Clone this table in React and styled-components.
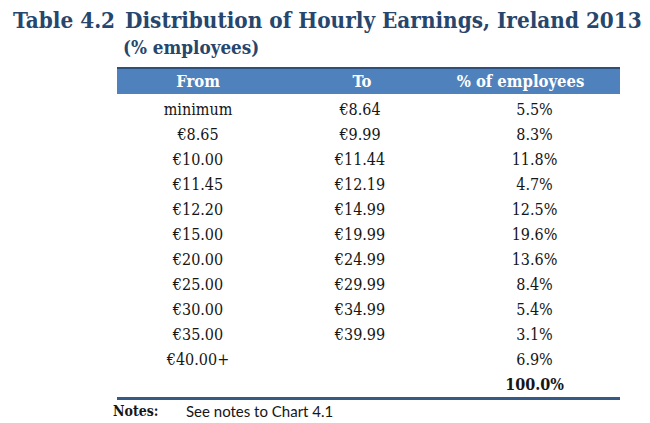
import React from 'react';
import styled, { createGlobalStyle } from 'styled-components';

const GlobalStyle = createGlobalStyle`
  html, body {
    margin: 0;
    padding: 0;
    background: #ffffff;
  }
`;

const rows = [
  ['minimum', '€8.64', '5.5%'],
  ['€8.65', '€9.99', '8.3%'],
  ['€10.00', '€11.44', '11.8%'],
  ['€11.45', '€12.19', '4.7%'],
  ['€12.20', '€14.99', '12.5%'],
  ['€15.00', '€19.99', '19.6%'],
  ['€20.00', '€24.99', '13.6%'],
  ['€25.00', '€29.99', '8.4%'],
  ['€30.00', '€34.99', '5.4%'],
  ['€35.00', '€39.99', '3.1%'],
  ['€40.00+', '', '6.9%'],
];

const Page = styled.div`
  width: 650px;
  height: 423px;
  overflow: hidden;
  font-family: "DejaVu Serif", "Liberation Serif", serif;
  color: #161616;
`;

const Title = styled.h1`
  margin: 0;
  padding: 6px 0 0 13px;
  height: 28px;
  font-size: 22.3px;
  line-height: 28px;
  font-weight: bold;
  font-stretch: condensed;
  color: #26466d;
  white-space: nowrap;
`;

const Sub = styled.span`
  margin-left: 10px;
`;

const Subtitle = styled.div`
  padding-left: 123px;
  height: 26px;
  font-size: 18.7px;
  line-height: 26px;
  font-weight: bold;
  font-stretch: condensed;
  color: #26466d;
`;

const Table = styled.div`
  margin: 7px 0 0 117px;
  width: 503px;
`;

const Grid = styled.div`
  display: grid;
  grid-template-columns: 162px 170px 171px;
  align-items: center;
`;

const HeadRow = styled(Grid)`
  height: 25px;
  border-top: 2px solid #2c4f7c;
  background: #4f81bd;
  color: #ffffff;
  font-weight: bold;
  font-size: 16.5px;
  font-stretch: condensed;
`;

const HeadCell = styled.div`
  text-align: center;
  padding-right: ${p => p.$shift || 0}px;
`;

const Body = styled.div`
  padding-top: 3px;
  border-bottom: 3px solid #355a86;
`;

const Row = styled(Grid)`
  height: 25px;
  font-size: 16px;
  font-stretch: condensed;
  font-weight: ${p => (p.$total ? 'bold' : 'normal')};
`;

const Cell = styled.div`
  text-align: center;
  padding-right: ${p => p.$shift || 0}px;
`;

const Notes = styled.div`
  display: flex;
  align-items: center;
  margin: 1px 0 0 113px;
  height: 20px;
  font-size: 14px;
`;

const NotesLabel = styled.span`
  width: 73px;
  font-weight: bold;
  font-stretch: condensed;
`;

const NotesText = styled.span`
  font-family: "Lato", "Liberation Sans", sans-serif;
  font-size: 15px;
`;

export default function App() {
  return (
    <Page>
      <GlobalStyle />
      <Title>
        Table 4.2<Sub>Distribution of Hourly Earnings, Ireland 2013</Sub>
      </Title>
      <Subtitle>(% employees)</Subtitle>
      <Table>
        <HeadRow>
          <HeadCell>From</HeadCell>
          <HeadCell $shift={4}>To</HeadCell>
          <HeadCell $shift={28}>% of employees</HeadCell>
        </HeadRow>
        <Body>
          {rows.map(r => (
            <Row key={r[0]}>
              <Cell>{r[0]}</Cell>
              <Cell $shift={8}>{r[1]}</Cell>
              <Cell>{r[2]}</Cell>
            </Row>
          ))}
          <Row $total>
            <Cell />
            <Cell />
            <Cell>100.0%</Cell>
          </Row>
        </Body>
      </Table>
      <Notes>
        <NotesLabel>Notes:</NotesLabel>
        <NotesText>See notes to Chart 4.1</NotesText>
      </Notes>
    </Page>
  );
}
